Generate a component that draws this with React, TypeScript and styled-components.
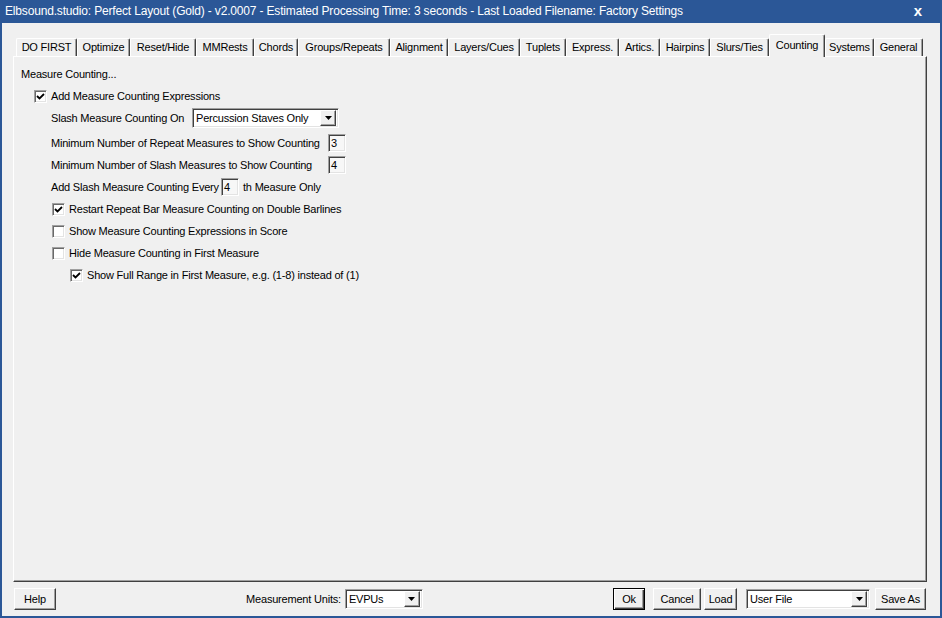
import React from "react";
import styled, { createGlobalStyle } from "styled-components";

const Global = createGlobalStyle`
  html, body { margin: 0; padding: 0; width: 942px; height: 618px; overflow: hidden; background: #2b5797; }
  #root { width: 942px; height: 618px; }
  * { box-sizing: border-box; }
`;

const Window = styled.div`
  width: 942px;
  height: 618px;
  display: flex;
  flex-direction: column;
  background: #2b5797;
  padding: 0 2px 2px 2px;
  font-family: "Liberation Sans", Arial, sans-serif;
  font-size: 11px;
  letter-spacing: -0.2px;
  color: #000;
`;

const TitleBar = styled.div`
  height: 23px;
  flex: none;
  display: flex;
  align-items: center;
  justify-content: space-between;
  padding: 0 18px 1px 3px;
  color: #fff;
  font-size: 12px;
  letter-spacing: -0.17px;
  white-space: nowrap;
`;

const CloseX = styled.span`
  font-size: 15px;
  font-weight: 700;
  line-height: 1;
  margin-top: -2px;
`;

const Body = styled.div`
  flex: 1;
  display: flex;
  flex-direction: column;
  background: #f0f0f0;
  padding: 11px 13px 0 11px;
`;

const TabStrip = styled.div`
  height: 22px;
  flex: none;
  display: flex;
  align-items: flex-end;
  padding-left: 3px;
`;

const Tab = styled.div<{ $w: number; $active?: boolean }>`
  width: ${(p) => p.$w}px;
  height: ${(p) => (p.$active ? 23 : 18)}px;
  margin-bottom: ${(p) => (p.$active ? -1 : 0)}px;
  position: ${(p) => (p.$active ? "relative" : "static")};
  z-index: ${(p) => (p.$active ? 2 : 0)};
  display: flex;
  justify-content: center;
  align-items: flex-start;
  padding-top: ${(p) => (p.$active ? 4 : 2)}px;
  background: #f0f0f0;
  border-top: 1px solid #fff;
  border-left: 1px solid #fff;
  border-right: 1px solid #404040;
  box-shadow: inset -1px 0 #a0a0a0;
  border-radius: 2px 2px 0 0;
  white-space: nowrap;
`;

const Panel = styled.div`
  flex: 1;
  display: flex;
  flex-direction: column;
  border-top: 1px solid #fff;
  border-left: 1px solid #fff;
  border-right: 1px solid #404040;
  border-bottom: 1px solid #404040;
  box-shadow: inset -1px -1px #a0a0a0;
  padding: 6px 0 0 7px;
`;

const Row = styled.div<{ $indent?: number; $mb?: number }>`
  height: 22px;
  display: flex;
  align-items: center;
  padding-left: ${(p) => p.$indent ?? 0}px;
  margin-bottom: ${(p) => p.$mb ?? 0}px;
  white-space: nowrap;
`;

const Label = styled.span<{ $w?: number; $ml?: number }>`
  display: inline-block;
  width: ${(p) => (p.$w ? `${p.$w}px` : "auto")};
  margin-left: ${(p) => p.$ml ?? 0}px;
  flex: none;
`;

const Box = styled.span`
  width: 13px;
  height: 13px;
  flex: none;
  margin-right: 4px;
  display: inline-flex;
  align-items: center;
  justify-content: center;
  background: #fff;
  border: 1px solid;
  border-color: #a0a0a0 #fff #fff #a0a0a0;
  box-shadow: inset 1px 1px #696969, inset -1px -1px #e3e3e3;
`;

const NumBox = styled.span<{ $mr?: number }>`
  width: 18px;
  height: 18px;
  flex: none;
  margin-right: ${(p) => p.$mr ?? 0}px;
  display: inline-flex;
  align-items: center;
  padding-left: 2px;
  background: #f7f7f7;
  border: 1px solid;
  border-color: #a0a0a0 #fff #fff #a0a0a0;
  box-shadow: inset 1px 1px #404040, inset -1px -1px #e3e3e3;
`;

const ComboBox = styled.div<{ $w: number; $ml?: number }>`
  width: ${(p) => p.$w}px;
  height: 20px;
  flex: none;
  margin-left: ${(p) => p.$ml ?? 0}px;
  display: flex;
  align-items: center;
  justify-content: space-between;
  background: #fff;
  border: 1px solid;
  border-color: #a0a0a0 #fff #fff #a0a0a0;
  box-shadow: inset 1px 1px #404040, inset -1px -1px #e3e3e3;
  padding: 2px 2px 2px 3px;
`;

const ComboText = styled.span`
  white-space: nowrap;
`;

const ArrowBtn = styled.span`
  width: 16px;
  height: 16px;
  flex: none;
  display: inline-flex;
  align-items: center;
  justify-content: center;
  background: #f0f0f0;
  border: 1px solid;
  border-color: #fff #404040 #404040 #fff;
  box-shadow: inset -1px -1px #a0a0a0;
`;

const BottomBar = styled.div`
  height: 34px;
  flex: none;
  display: flex;
  align-items: center;
  padding: 0 1px 0 1px;
`;

const Spacer = styled.div`
  flex: 1;
`;

const Button = styled.div<{ $w: number; $ml?: number; $def?: boolean }>`
  width: ${(p) => p.$w}px;
  height: 22px;
  flex: none;
  margin-left: ${(p) => p.$ml ?? 0}px;
  display: flex;
  align-items: center;
  justify-content: center;
  background: #f0f0f0;
  border: 1px solid;
  border-color: ${(p) => (p.$def ? "#000" : "#fff #404040 #404040 #fff")};
  box-shadow: ${(p) =>
    p.$def
      ? "inset 1px 1px #fff, inset -1px -1px #404040, inset -2px -2px #a0a0a0"
      : "inset -1px -1px #a0a0a0"};
`;

const Check = () => (
  <svg width="9" height="9" viewBox="0 0 9 9">
    <polyline points="1,4 3.5,6.5 8,2" fill="none" stroke="#000" strokeWidth="1.8" />
  </svg>
);

const Arrow = () => (
  <svg width="7" height="4" viewBox="0 0 7 4">
    <polygon points="0,0 7,0 3.5,4" fill="#000" />
  </svg>
);

const CheckBox = ({ checked }: { checked?: boolean }) => <Box>{checked ? <Check /> : null}</Box>;

const Combo = ({ w, ml, text }: { w: number; ml?: number; text: string }) => (
  <ComboBox $w={w} $ml={ml}>
    <ComboText>{text}</ComboText>
    <ArrowBtn>
      <Arrow />
    </ArrowBtn>
  </ComboBox>
);

const tabs: { name: string; w: number }[] = [
  { name: "DO FIRST", w: 61 },
  { name: "Optimize", w: 53 },
  { name: "Reset/Hide", w: 66 },
  { name: "MMRests", w: 58 },
  { name: "Chords", w: 44 },
  { name: "Groups/Repeats", w: 92 },
  { name: "Alignment", w: 58 },
  { name: "Layers/Cues", w: 72 },
  { name: "Tuplets", w: 46 },
  { name: "Express.", w: 53 },
  { name: "Artics.", w: 41 },
  { name: "Hairpins", w: 50 },
  { name: "Slurs/Ties", w: 59 },
  { name: "Counting", w: 56 },
  { name: "Systems", w: 49 },
  { name: "General", w: 49 },
];

export default function App() {
  return (
    <>
      <Global />
      <Window>
        <TitleBar>
          <span>
            Elbsound.studio: Perfect Layout (Gold) - v2.0007 - Estimated Processing Time: 3 seconds - Last Loaded
            Filename: Factory Settings
          </span>
          <CloseX>x</CloseX>
        </TitleBar>
        <Body>
          <TabStrip>
            {tabs.map((t) => (
              <Tab key={t.name} $w={t.w} $active={t.name === "Counting"}>
                {t.name}
              </Tab>
            ))}
          </TabStrip>
          <Panel>
            <Row>Measure Counting...</Row>
            <Row $indent={13}>
              <CheckBox checked />
              Add Measure Counting Expressions
            </Row>
            <Row $indent={30} $mb={3}>
              <Label $w={141}>Slash Measure Counting On</Label>
              <Combo w={147} text="Percussion Staves Only" />
            </Row>
            <Row $indent={30}>
              <Label $w={277}>Minimum Number of Repeat Measures to Show Counting</Label>
              <NumBox>3</NumBox>
            </Row>
            <Row $indent={30}>
              <Label $w={277}>Minimum Number of Slash Measures to Show Counting</Label>
              <NumBox>4</NumBox>
            </Row>
            <Row $indent={30}>
              <Label $w={170}>Add Slash Measure Counting Every</Label>
              <NumBox $mr={4}>4</NumBox>
              th Measure Only
            </Row>
            <Row $indent={31}>
              <CheckBox checked />
              Restart Repeat Bar Measure Counting on Double Barlines
            </Row>
            <Row $indent={31}>
              <CheckBox />
              Show Measure Counting Expressions in Score
            </Row>
            <Row $indent={31}>
              <CheckBox />
              Hide Measure Counting in First Measure
            </Row>
            <Row $indent={49}>
              <CheckBox checked />
              Show Full Range in First Measure, e.g. (1-8) instead of (1)
            </Row>
          </Panel>
          <BottomBar>
            <Button $w={42}>Help</Button>
            <Spacer />
            <Label>Measurement Units:</Label>
            <Combo w={78} ml={4} text="EVPUs" />
            <Spacer />
            <Button $w={32} $def>
              Ok
            </Button>
            <Button $w={48} $ml={8}>
              Cancel
            </Button>
            <Button $w={33} $ml={3}>
              Load
            </Button>
            <Combo w={124} ml={9} text="User File" />
            <Button $w={51} $ml={5}>
              Save As
            </Button>
          </BottomBar>
        </Body>
      </Window>
    </>
  );
}
